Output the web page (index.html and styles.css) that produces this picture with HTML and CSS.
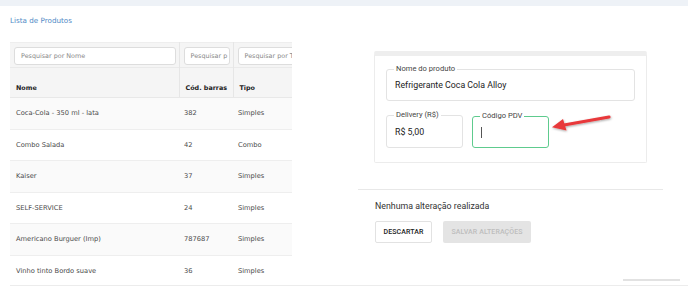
FILE: index.html
```html
<!DOCTYPE html>
<html lang="pt-BR">
<head>
<meta charset="utf-8">
<link rel="stylesheet" href="styles.css">
</head>
<body>
<div class="topbar"></div>
<div class="page">
  <section class="left">
    <h1 class="title">Lista de Produtos</h1>
    <div class="table-wrap">
      <table class="grid">
        <colgroup><col class="c1"><col class="c2"><col class="c3"></colgroup>
        <thead>
          <tr class="filters">
            <th><div class="search">Pesquisar por Nome</div></th>
            <th><div class="search">Pesquisar p</div></th>
            <th><div class="search">Pesquisar por T</div></th>
          </tr>
          <tr class="heads">
            <th>Nome</th><th>Cód. barras</th><th>Tipo</th>
          </tr>
        </thead>
        <tbody>
          <tr class="odd"><td>Coca-Cola - 350 ml - lata</td><td>382</td><td>Simples</td></tr>
          <tr><td>Combo Salada</td><td>42</td><td>Combo</td></tr>
          <tr class="odd"><td>Kaiser</td><td>37</td><td>Simples</td></tr>
          <tr><td>SELF-SERVICE</td><td>24</td><td>Simples</td></tr>
          <tr class="odd"><td>Americano Burguer (Imp)</td><td>787687</td><td>Simples</td></tr>
          <tr><td>Vinho tinto Bordo suave</td><td>36</td><td>Simples</td></tr>
        </tbody>
      </table>
    </div>
  </section>
  <section class="right">
    <div class="card">
      <fieldset class="field wide">
        <legend>Nome do produto</legend>
        <div class="value">Refrigerante Coca Cola Alloy</div>
      </fieldset>
      <div class="row">
        <fieldset class="field small">
          <legend>Delivery (R$)</legend>
          <div class="value">R$ 5,00</div>
        </fieldset>
        <fieldset class="field small focus">
          <legend>Código PDV</legend>
          <div class="value"><span class="caret"></span></div>
        </fieldset>
        <svg class="arrow" width="64" height="20" viewBox="0 0 64 20">
          <defs>
            <filter id="sh" x="-20%" y="-50%" width="140%" height="200%">
              <feDropShadow dx="0.5" dy="1" stdDeviation="0.8" flood-color="#000" flood-opacity="0.35"/>
            </filter>
          </defs>
          <g filter="url(#sh)">
            <path d="M59 3 L14 11" stroke="#e8393a" stroke-width="3.2" stroke-linecap="round" fill="none"/>
            <path d="M2 13.2 L13 5 L16.5 16.5 Z" fill="#e8393a"/>
          </g>
        </svg>
      </div>
    </div>
    <div class="divider"></div>
    <p class="status">Nenhuma alteração realizada</p>
    <div class="actions">
      <button class="btn outline">DESCARTAR</button>
      <button class="btn disabled">SALVAR ALTERAÇÕES</button>
    </div>
  </section>
</div>
<div class="bottombar"></div>
<div class="bottomline"></div>
</body>
</html>
```

FILE: styles.css
```css
* { box-sizing: border-box; }
html, body { margin: 0; padding: 0; }
body {
  width: 688px;
  height: 286px;
  overflow: hidden;
  background: #fff;
  font-family: "DejaVu Sans", "Open Sans", sans-serif;
  color: #333;
  position: relative;
  -webkit-font-smoothing: antialiased;
}
.topbar { height: 6px; background: #eef2f7; }
.page {
  display: grid;
  grid-template-columns: 282px 305px;
  column-gap: 66px;
  padding-left: 10px;
}
.title {
  margin: 0;
  padding-top: 10px;
  height: 36px;
  font-size: 7.2px;
  font-weight: normal;
  color: #4f8ac6;
  line-height: 9px;
}
.table-wrap { width: 282px; overflow: hidden; }
.grid {
  border-collapse: collapse;
  table-layout: fixed;
  width: 330px;
  font-size: 6.7px;
  color: #4a4a4a;
}
.c1 { width: 169px; }
.c2 { width: 54px; }
.c3 { width: 107px; }
.grid th, .grid td {
  text-align: left;
  padding: 0 0 0 6px;
}
.filters th {
  background: #f5f5f5;
  height: 25px;
  padding: 1px 3px 0 4px;
  border-right: 1px solid #e6e6e6;
  border-top: 1px solid #eee;
}
.filters th:first-child { padding-left: 4px; }
.search {
  height: 18px;
  border: 1px solid #ddd;
  border-radius: 3px;
  background: #fff;
  color: #888;
  font-weight: normal;
  font-size: 6.4px;
  line-height: 16px;
  padding-left: 6px;
  white-space: nowrap;
  overflow: hidden;
}
.heads th {
  background: #f5f5f5;
  height: 30px;
  padding-top: 10px;
  font-weight: bold;
  font-size: 6.4px;
  color: #222;
  border-right: 1px solid #e6e6e6;
  border-top: 1px solid #eaeaea;
  border-bottom: 1px solid #e8e8e8;
  white-space: nowrap;
}
.heads th:first-child { padding-left: 6px; }
.grid tbody td {
  height: 31.5px;
  border-bottom: 1px solid #eeeeee;
  white-space: nowrap;
}
.grid tbody td:nth-child(2) { padding-left: 5px; }
.grid tbody td:nth-child(3) { padding-left: 5px; }
.grid tbody tr.odd td { background: #fafafa; }

.right { padding-top: 45px; }
.card {
  margin-left: 16px;
  width: 273px;
  height: 112px;
  border: 1px solid #ececec;
  border-top: 5px solid #eeeeee;
  border-radius: 2px;
  padding: 9px 11px 0 11px;
  font-family: Roboto, "Noto Sans", sans-serif;
}
.field {
  margin: 0;
  border: 1px solid #e3e3e3;
  border-radius: 3px;
  padding: 0 8px;
  min-width: 0;
}
.field legend {
  font-size: 7.6px;
  color: #444;
  padding: 0 2px;
  margin-left: -1px;
  line-height: 8px;
}
.field .value {
  font-size: 8.8px;
  color: #222;
  line-height: 11px;
}
.wide { width: 249px; height: 36px; }
.wide .value { padding-top: 7px; }
.row {
  display: flex;
  align-items: flex-start;
  margin-top: 10px;
  gap: 9px;
}
.small { width: 77px; height: 37px; }
.small .value { padding-top: 8px; }
.focus {
  border: 1.5px solid #5ecb8e;
  margin-top: 1px;
  height: 36px;
}
.caret {
  display: inline-block;
  width: 1px;
  height: 11px;
  background: #555;
  margin-top: -1px;
}
.arrow { margin-left: -8px; margin-top: 3px; }
.divider {
  height: 1px;
  background: #e8e8e8;
  margin-top: 26px;
  width: 305px;
}
.status {
  margin: 11px 0 0 17px;
  font-family: Roboto, "Noto Sans", sans-serif;
  font-size: 8.8px;
  color: #333;
  line-height: 11px;
}
.actions {
  display: flex;
  gap: 11px;
  margin: 9px 0 0 17px;
}
.btn {
  height: 22px;
  font-family: Roboto, "Noto Sans", sans-serif;
  font-size: 7px;
  font-weight: 500;
  border-radius: 2px;
  padding: 0;
  letter-spacing: 0.1px;
}
.outline {
  width: 57px;
  background: #fff;
  border: 1px solid #e2e2e2;
  color: #222;
}
.disabled {
  width: 88px;
  background: #e4e4e4;
  border: none;
  color: #bdbdbd;
}
.bottombar {
  position: absolute;
  left: 623px;
  top: 279px;
  width: 57px;
  height: 2px;
  background: #e2e2e2;
}
.bottomline {
  position: absolute;
  left: 10px;
  right: 0;
  top: 285px;
  height: 1px;
  background: #ececec;
}
```
